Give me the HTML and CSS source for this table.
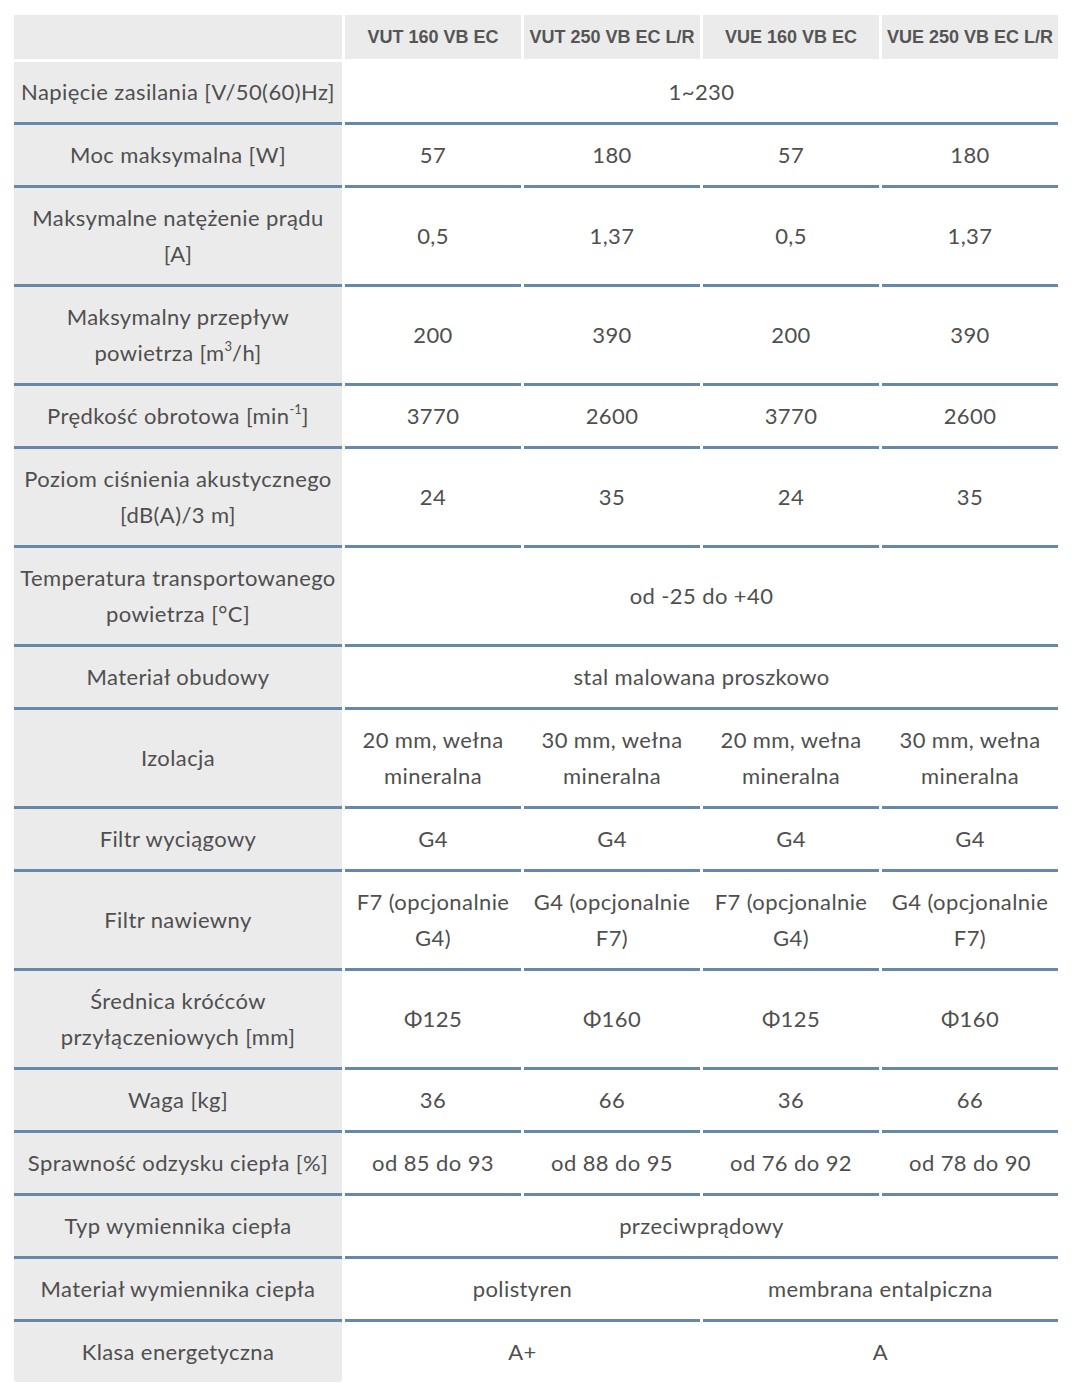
FILE: index.html
```html
<!DOCTYPE html>
<html lang="pl">
<head>
<meta charset="utf-8">
<title>Dane techniczne</title>
<link rel="stylesheet" href="styles.css">
</head>
<body>
<table class="spec">
  <colgroup>
    <col class="c-label">
    <col class="c-val"><col class="c-val"><col class="c-val"><col class="c-val">
  </colgroup>
  <thead>
    <tr>
      <th></th>
      <th>VUT 160 VB EC</th>
      <th>VUT 250 VB EC L/R</th>
      <th>VUE 160 VB EC</th>
      <th>VUE 250 VB EC L/R</th>
    </tr>
  </thead>
  <tbody>
    <tr><td class="lbl">Napięcie zasilania [V/50(60)Hz]</td><td colspan="4">1~230</td></tr>
    <tr><td class="lbl">Moc maksymalna [W]</td><td>57</td><td>180</td><td>57</td><td>180</td></tr>
    <tr><td class="lbl">Maksymalne natężenie prądu [A]</td><td>0,5</td><td>1,37</td><td>0,5</td><td>1,37</td></tr>
    <tr><td class="lbl">Maksymalny przepływ powietrza [m<sup>3</sup>/h]</td><td>200</td><td>390</td><td>200</td><td>390</td></tr>
    <tr><td class="lbl">Prędkość obrotowa [min<sup>-1</sup>]</td><td>3770</td><td>2600</td><td>3770</td><td>2600</td></tr>
    <tr><td class="lbl">Poziom ciśnienia akustycznego [dB(A)/3 m]</td><td>24</td><td>35</td><td>24</td><td>35</td></tr>
    <tr><td class="lbl">Temperatura transportowanego powietrza [°C]</td><td colspan="4">od -25 do +40</td></tr>
    <tr><td class="lbl">Materiał obudowy</td><td colspan="4">stal malowana proszkowo</td></tr>
    <tr><td class="lbl">Izolacja</td><td>20 mm, wełna mineralna</td><td>30 mm, wełna mineralna</td><td>20 mm, wełna mineralna</td><td>30 mm, wełna mineralna</td></tr>
    <tr><td class="lbl">Filtr wyciągowy</td><td>G4</td><td>G4</td><td>G4</td><td>G4</td></tr>
    <tr><td class="lbl">Filtr nawiewny</td><td>F7 (opcjonalnie G4)</td><td>G4 (opcjonalnie F7)</td><td>F7 (opcjonalnie G4)</td><td>G4 (opcjonalnie F7)</td></tr>
    <tr><td class="lbl">Średnica króćców przyłączeniowych [mm]</td><td>Φ125</td><td>Φ160</td><td>Φ125</td><td>Φ160</td></tr>
    <tr><td class="lbl">Waga [kg]</td><td>36</td><td>66</td><td>36</td><td>66</td></tr>
    <tr><td class="lbl">Sprawność odzysku ciepła [%]</td><td>od 85 do 93</td><td>od 88 do 95</td><td>od 76 do 92</td><td>od 78 do 90</td></tr>
    <tr><td class="lbl">Typ wymiennika ciepła</td><td colspan="4">przeciwprądowy</td></tr>
    <tr><td class="lbl">Materiał wymiennika ciepła</td><td colspan="2">polistyren</td><td colspan="2">membrana entalpiczna</td></tr>
    <tr class="last"><td class="lbl">Klasa energetyczna</td><td colspan="2">A+</td><td colspan="2">A</td></tr>
  </tbody>
</table>
</body>
</html>
```

FILE: styles.css
```css
html, body {
  margin: 0;
  padding: 0;
  background: #ffffff;
}

.spec {
  margin: 15px 0 0 11px;
  width: 1050px;
  table-layout: fixed;
  border-collapse: separate;
  border-spacing: 3px 0;
  font-family: Lato, "Noto Sans", sans-serif;
  color: #4f4f4f;
}

.c-label { width: 328px; }
.c-val { width: 176px; }

.spec th {
  height: 44px;
  padding: 0;
  background: #ebebeb;
  border-bottom: 3px solid #ffffff;
  font-family: "Liberation Sans", Arial, sans-serif;
  font-weight: bold;
  font-size: 18px;
  color: #555555;
  text-align: center;
  vertical-align: middle;
  white-space: nowrap;
}

.spec td {
  padding: 12px 4px;
  font-size: 22px;
  line-height: 36px;
  letter-spacing: 0.4px;
  text-align: center;
  vertical-align: middle;
  border-bottom: 3px solid #6688a9;
}

.spec td.lbl {
  background: #ebebeb;
}

.spec tr.last td {
  border-bottom: 0;
}

.spec tr.last td.lbl {
  border-radius: 0 0 3px 3px;
}

.spec sup {
  font-size: 13px;
  line-height: 0;
  vertical-align: 10px;
  letter-spacing: 0;
}
```
